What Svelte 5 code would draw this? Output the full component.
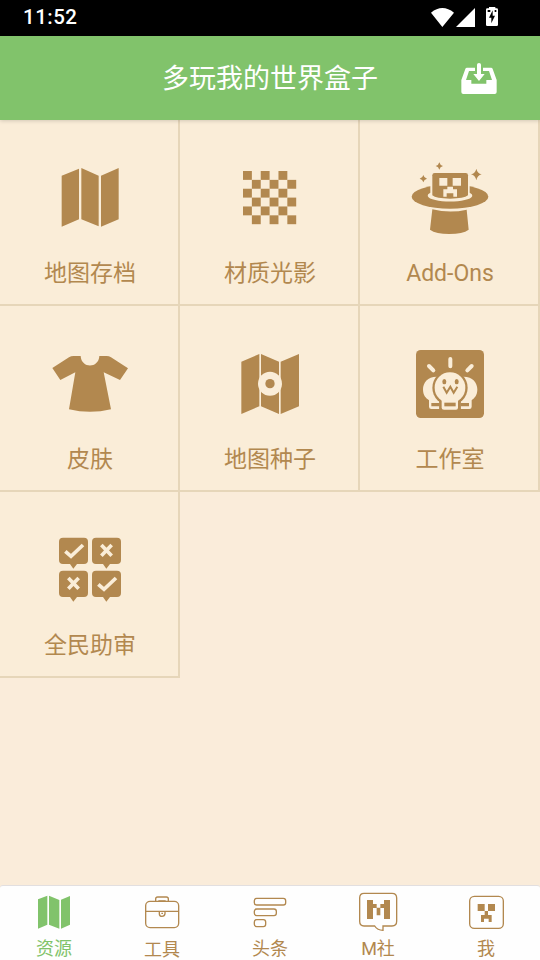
<script lang="ts">
  interface Item {
    id: string;
    label: string;
  }

  const entries: Item[] = [
    { id: "map", label: "地图存档" },
    { id: "texture", label: "材质光影" },
    { id: "addons", label: "Add-Ons" },
    { id: "skin", label: "皮肤" },
    { id: "seed", label: "地图种子" },
    { id: "studio", label: "工作室" },
    { id: "review", label: "全民助审" },
  ];

  const tabs: Item[] = [
    { id: "resource", label: "资源" },
    { id: "tools", label: "工具" },
    { id: "news", label: "头条" },
    { id: "mojang", label: "M社" },
    { id: "me", label: "我" },
  ];

  const squares = Array.from({ length: 36 }, (_, i) => ({
    x: i % 6,
    y: Math.floor(i / 6),
  })).filter(({ x, y }) => (x + y) % 2 === 0);

  let active = $state("resource");
</script>

{#snippet entryIcon(id: string)}
  {#if id === "map"}
    <svg class="entry-icon" viewBox="0 30 300 240">
      <path d="M65 77l52-21v152l-52 22zM124 54l52 23v152l-52-21zM183 77l53-23v154l-53 22z" />
    </svg>
  {:else if id === "texture"}
    <svg class="entry-icon" viewBox="0 30 300 240">
      {#each squares as { x, y }}
        <rect x={69 + x * 26.6} y={63 + y * 26.6} width="26.6" height="26.6" />
      {/each}
    </svg>
  {:else if id === "addons"}
    <svg class="entry-icon" viewBox="0 30 300 240">
      <ellipse cx="150" cy="140" rx="115" ry="36" />
      <path class="cut" d="M91 95V128Q82 132 83 138C90 160 210 160 217 138Q218 132 209 128V95z" />
      <path d="M104 69H197Q204 69 204 76V136Q192 146 150 146T97 136V76Q97 69 104 69z" />
      <path class="cut" d="M118 84h24v23h-24zM158 84h25v23h-25zM142 110h17v8h12v22h-11v-10h-20v10h-10v-22h12z" />
      <path d="M97 178Q150 191 200 179L206 239Q188 252 148 252T90 239z" />
      <path d="M118 37q2 9 11 11q-9 2-11 11q-2-9-11-11q9-2 11-11zM70 75q2 9 11 11q-9 2-11 11q-2-9-11-11q9-2 11-11zM229 56q3 14 16 17q-13 3-16 18q-3-15-16-18q13-3 16-17z" />
    </svg>
  {:else if id === "skin"}
    <svg class="entry-icon" viewBox="0 18 300 240">
      <path d="M122 48C124 86 176 86 178 48H200Q207 48 213 52L264 85L240 120L191 97L213 208Q150 223 87 208L106 97L61 120L37 84L87 52Q93 48 101 48z" />
    </svg>
  {:else if id === "seed"}
    <svg class="entry-icon" viewBox="0 18 300 240">
      <path d="M64 65l54-23v157l-54 23zM123 42l54 23v157l-54-23zM182 65l55-23v157l-55 23z" />
      <circle class="cut" cx="150" cy="131" r="36" />
      <circle cx="150" cy="131" r="14" />
    </svg>
  {:else if id === "studio"}
    <svg class="entry-icon" viewBox="0 18 300 240">
      <rect x="48" y="30" width="204" height="204" rx="14" />
      <path class="cut-line rays" d="M151 57V79M87 78L100 91M215 78L202 91" />
      <g class="cut">
        <path d="M110 110C83 110 69 128 69 148C69 166 77 174 87 181V200Q87 207 94 207H118V110z" />
        <path d="M191 110C218 110 232 128 232 148C232 166 224 174 215 181V200Q215 207 208 207H182V110z" />
      </g>
      <path d="M94 189H119V199H94zM182 189H207V199H182z" />
      <circle cx="150" cy="143" r="53" />
      <path d="M118 175H182V214H118z" />
      <circle class="cut" cx="150" cy="143" r="46" />
      <path class="cut" d="M125 173H174V203Q174 209 168 209H132Q125 209 125 203z" />
      <rect x="133" y="188" width="34" height="11" />
      <ellipse cx="133" cy="125" rx="6" ry="8" />
      <ellipse cx="170" cy="125" rx="6" ry="8" />
      <path class="mouth" d="M130 140L140 158L151 140L161 158L172 140" />
    </svg>
  {:else}
    <svg class="entry-icon" viewBox="0 36 300 240">
      {#each [[57, 53], [156, 53], [57, 152], [156, 152]] as [x, y], i}
        <g transform="translate({x} {y})">
          <path d="M12 0H75Q87 0 87 12V67Q87 79 75 79H54L43 93L33 79H12Q0 79 0 67V12Q0 0 12 0z" />
          {#if i === 0 || i === 3}
            <path class="cut-line" d="M19 41L36 56L72 22" />
          {:else}
            <path class="cut-line" d="M28 22L59 54M59 22L28 54" />
          {/if}
        </g>
      {/each}
    </svg>
  {/if}
{/snippet}

{#snippet tabIcon(id: string)}
  {#if id === "resource"}
    <svg class="tab-icon" viewBox="72 45 180 120">
      <path class="solid" d="M114 73l28-11v87l-28 12zM147 62l31 13v86l-31-12zM183 74l27-11v86l-27 12z" />
    </svg>
  {:else if id === "tools"}
    <svg class="tab-icon" viewBox="396 45 180 120">
      <rect x="437" y="79" width="99" height="79" rx="13" />
      <path d="M437 109H536M467 79V72Q467 66 473 66H499Q505 66 505 72V79M475 78H497" />
      <path d="M478 110V116Q478 124 486 124T495 116V110M484 115H489" />
    </svg>
  {:else if id === "news"}
    <svg class="tab-icon" viewBox="30 45 180 120">
      <rect x="73" y="70" width="94" height="20" rx="7" />
      <rect x="73" y="102" width="66" height="20" rx="7" />
      <rect x="73" y="134" width="34" height="21" rx="7" />
    </svg>
  {:else if id === "mojang"}
    <svg class="tab-icon" viewBox="354 45 180 120">
      <path d="M402 55H486Q500 55 500 69V139Q500 153 486 153H459V166Q442 166 434 153H402Q389 153 389 139V69Q389 55 402 55z" />
      <path class="solid" d="M411 75h18v12h11v11h11v-11h11v-12h18v57h-18v-33h-11v22h-11v-22h-11v33h-18z" />
    </svg>
  {:else}
    <svg class="tab-icon" viewBox="318 45 180 120">
      <rect x="359" y="64" width="101" height="96" rx="14" />
      <path class="solid" d="M383 87h21v21h-21zM414 87h21v21h-21zM404 108h10v12h11v21h-9v-10h-14v10h-9v-21h11z" />
    </svg>
  {/if}
{/snippet}

<div class="screen">
  <div class="status">
    <span class="clock">11:52</span>
    <svg class="status-icons" viewBox="30 15 210 72">
      <path d="M33 38Q67 10 102 38L67 81zM165 24V81H108z" />
      <path d="M202 25H207V21H226V25H230Q234 25 234 29V74Q234 78 230 78H202Q198 78 198 74V29Q198 25 202 25z" />
      <path class="bolt" d="M218 31V47H225L214 70V53H207z" />
      <path class="bolt" d="M203 30H211V36H203zM224 30H229V36H224z" />
    </svg>
  </div>

  <header class="title-bar">
    <h1>多玩我的世界盒子</h1>
    <button type="button" class="download" aria-label="下载">
      <svg viewBox="105 180 150 114">
        <path class="tray" fill-rule="evenodd" d="M141 203H165V213H147L138 240H154V251H199V240H216L207 213H189V203H213Q217 203 218 207L230 240V276Q230 282 224 282H130Q124 282 124 276V240L136 207Q137 203 141 203z" />
        <path d="M171 194Q171 189 177 189T183 194V222H194L177 243L160 222H171z" />
      </svg>
    </button>
  </header>

  <main class="grid">
    {#each entries as entry (entry.id)}
      <button type="button" class="entry">
        {@render entryIcon(entry.id)}
        <span class="entry-label">{entry.label}</span>
      </button>
    {/each}
  </main>

  <nav class="tabs">
    {#each tabs as tab (tab.id)}
      <button
        type="button"
        class="tab"
        class:active={active === tab.id}
        onclick={() => (active = tab.id)}
      >
        {@render tabIcon(tab.id)}
        <span>{tab.label}</span>
      </button>
    {/each}
  </nav>
</div>

<style>
  :global(body) {
    background: #faecda;
  }

  .screen {
    --brown: #b2884f;
    --green: #81c36b;
    --cell: #faedd8;
    --line: #e6d6b9;
    display: flex;
    flex-direction: column;
    width: 540px;
    height: 960px;
    overflow: hidden;
    background: #faecda;
    font-family: Roboto, "Noto Sans CJK SC", sans-serif;
  }

  button {
    border: 0;
    padding: 0;
    background: none;
    font: inherit;
    cursor: pointer;
  }

  svg {
    display: block;
  }

  .status {
    flex: none;
    display: flex;
    justify-content: space-between;
    box-sizing: border-box;
    height: 36px;
    padding: 5px 40px 0 23px;
    background: #000;
    color: #fff;
  }

  .clock {
    font-size: 20.5px;
    font-weight: 500;
    line-height: 24px;
    letter-spacing: 0.5px;
  }

  .status-icons {
    width: 70px;
    height: 24px;
    fill: #fff;
  }

  .status-icons .bolt {
    fill: #000;
  }

  .title-bar {
    flex: none;
    z-index: 1;
    display: grid;
    grid-template-columns: 85px 1fr 85px;
    align-items: center;
    height: 84px;
    background: var(--green);
    box-shadow: 0 1px 4px rgba(0, 0, 0, 0.16);
  }

  h1 {
    grid-column: 2;
    margin: 2px 0 0;
    color: #fff;
    font-size: 27px;
    font-weight: 400;
    line-height: 40px;
    text-align: center;
  }

  .download svg {
    width: 50px;
    height: 38px;
    margin-top: 2px;
    fill: #fff;
  }

  .grid {
    flex: 1;
    display: grid;
    grid-template-columns: repeat(3, 180px);
    grid-auto-rows: 186px;
    align-content: start;
  }

  .entry {
    display: flex;
    flex-direction: column;
    align-items: center;
    box-sizing: border-box;
    padding: 40px 0 0 2px;
    border-right: 2px solid var(--line);
    border-bottom: 2px solid var(--line);
    background: var(--cell);
    color: var(--brown);
  }

  .entry-icon {
    width: 100px;
    height: 80px;
    fill: var(--brown);
  }

  .entry-icon .cut {
    fill: var(--cell);
  }

  .entry-icon .cut-line {
    fill: none;
    stroke: var(--cell);
    stroke-width: 11;
  }

  .entry-icon .rays {
    stroke-width: 12;
    stroke-linecap: round;
  }

  .entry-icon .mouth {
    fill: none;
    stroke: var(--brown);
    stroke-width: 6;
  }

  .entry-label {
    margin-top: 17px;
    font-size: 23px;
    line-height: 34px;
  }

  .tabs {
    flex: none;
    display: grid;
    grid-template-columns: repeat(5, 1fr);
    box-sizing: border-box;
    height: 75px;
    border-top: 1px solid #e2dfe0;
    border-radius: 3px 3px 0 0;
    background: #fefefe;
  }

  .tab {
    display: flex;
    flex-direction: column;
    align-items: center;
    padding-top: 4px;
    color: var(--brown);
    font-size: 18px;
    line-height: 26px;
  }

  .tab span {
    margin-top: 6px;
  }

  .tab:nth-child(2) span {
    margin-top: 7px;
  }

  .tab.active {
    color: var(--green);
  }

  .tab-icon {
    width: 60px;
    height: 40px;
    overflow: visible;
    fill: none;
    stroke: currentColor;
    stroke-width: 4;
  }

  .tab-icon .solid {
    fill: currentColor;
    stroke: none;
  }
</style>
